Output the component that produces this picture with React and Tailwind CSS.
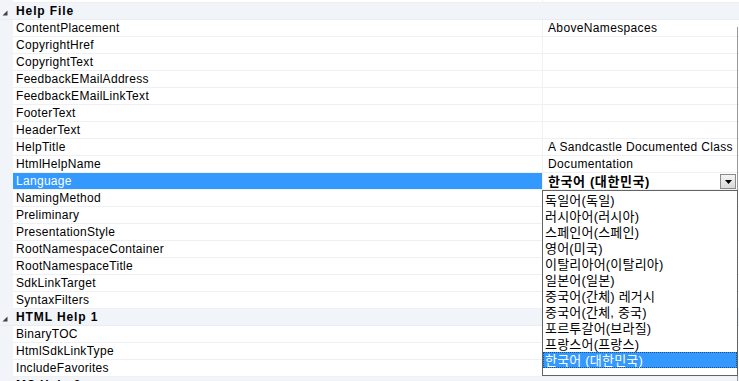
import React from "react";

const font = { fontFamily: '"Liberation Sans", "Noto Sans CJK KR", sans-serif' };

const help = [
  ["ContentPlacement", "AboveNamespaces"],
  ["CopyrightHref", ""],
  ["CopyrightText", ""],
  ["FeedbackEMailAddress", ""],
  ["FeedbackEMailLinkText", ""],
  ["FooterText", ""],
  ["HeaderText", ""],
  ["HelpTitle", "A Sandcastle Documented Class"],
  ["HtmlHelpName", "Documentation"],
  ["Language", "한국어 (대한민국)", true],
  ["NamingMethod", ""],
  ["Preliminary", ""],
  ["PresentationStyle", ""],
  ["RootNamespaceContainer", ""],
  ["RootNamespaceTitle", ""],
  ["SdkLinkTarget", ""],
  ["SyntaxFilters", ""],
];
const html1 = [
  ["BinaryTOC", ""],
  ["HtmlSdkLinkType", ""],
  ["IncludeFavorites", ""],
];
const langs = [
  "독일어(독일)",
  "러시아어(러시아)",
  "스페인어(스페인)",
  "영어(미국)",
  "이탈리아어(이탈리아)",
  "일본어(일본)",
  "중국어(간체) 레거시",
  "중국어(간체, 중국)",
  "포르투갈어(브라질)",
  "프랑스어(프랑스)",
  "한국어 (대한민국)",
];

function Tri() {
  return (
    <svg width="6" height="6" viewBox="0 0 6 6" className="ml-[2px] mt-[3px]">
      <polygon points="5.5,0.5 5.5,5.5 0.5,5.5" fill="#404040" />
    </svg>
  );
}

function Header({ title }) {
  return (
    <div className="flex h-[17px] bg-[#f1f4f9] border-b border-[#e9ecf1] items-center">
      <div className="w-[13px] h-full flex items-center">
        <Tri />
      </div>
      <div className="pl-[3px] font-bold text-[12px] tracking-[0.9px] text-black leading-none">{title}</div>
    </div>
  );
}

function Row({ name, value, sel }) {
  return (
    <div className="flex h-[17px] items-stretch">
      <div className="w-[13px] bg-[#f1f4f9]" />
      <div
        className={
          "w-[530px] pl-[3px] flex items-center border-b border-r border-[#eef0f4] text-[12px] tracking-[0.3px] leading-none " +
          (sel ? "bg-[#3399ff] text-white" : "text-black")
        }
      >
        {name}
      </div>
      <div className="flex-1 pl-[5px] flex items-center border-b border-[#eef0f4] text-[12px] tracking-[0.35px] leading-none text-black relative">
        <span className={sel ? "font-bold text-[13px] tracking-[0.6px]" : ""}>{value}</span>
        {sel && (
          <div className="absolute right-[3px] top-[1px] w-[16px] h-[15px] border border-[#8a8a8a] bg-gradient-to-b from-[#f4f4f4] to-[#d9d9d9] flex items-center justify-center">
            <svg width="7" height="4" viewBox="0 0 7 4">
              <polygon points="0,0 7,0 3.5,4" fill="#000" />
            </svg>
          </div>
        )}
      </div>
    </div>
  );
}

export default function App() {
  return (
    <div className="w-[739px] h-[381px] bg-white relative overflow-hidden" style={font}>
      <div className="flex h-[3px]">
        <div className="w-[13px] bg-[#f1f4f9]" />
        <div className="w-[530px] border-b border-r border-[#eef0f4]" />
        <div className="flex-1 border-b border-[#eef0f4]" />
      </div>
      <Header title="Help File" />
      {help.map(([n, v, s]) => (
        <Row key={n} name={n} value={v} sel={s} />
      ))}
      <Header title="HTML Help 1" />
      {html1.map(([n, v]) => (
        <Row key={n} name={n} value={v} />
      ))}
      <Header title="MS Help 2" />

      <div className="absolute right-[1px] top-[27px] bottom-0 w-[1px] bg-[#9a9a9a]" />

      <div className="absolute left-[542px] top-[190px] w-[196px] h-[186px] bg-white border border-[#646464] pt-[1px]">
        {langs.map((l, i) => (
          <div
            key={l}
            className={
              "h-[16px] pl-[2px] flex items-center text-[13px] tracking-[0.2px] leading-none " +
              (i === langs.length - 1
                ? "bg-[#3399ff] text-white outline outline-1 outline-dotted outline-offset-[-1px] outline-[#1a4f8a]"
                : "text-black")
            }
          >
            {l}
          </div>
        ))}
      </div>
    </div>
  );
}
